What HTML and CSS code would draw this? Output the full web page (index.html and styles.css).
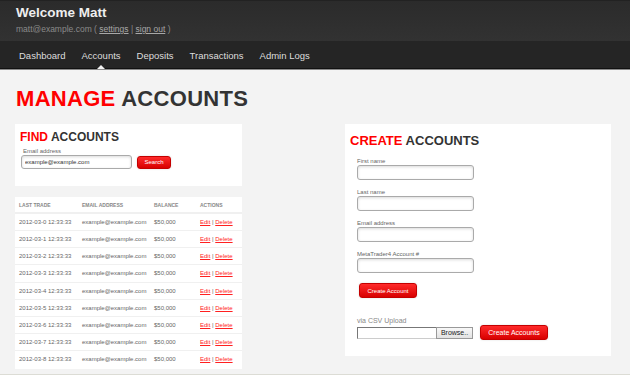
FILE: index.html
```html
<!DOCTYPE html>
<html lang="en">

<head>
  <meta charset="UTF-8">
  <meta name="viewport" content="width=device-width, initial-scale=1">
  <title>Manage Accounts</title>
  <link rel="stylesheet" href="styles.css">
</head>

<body>

  <header class="topbar">
    <div class="welcome">Welcome Matt</div>
    <div class="userline">matt@example.com ( <a href="#">settings</a> | <a href="#">sign out</a> )</div>
  </header>

  <nav class="navbar">
    <ul>
      <li><a href="#">Dashboard</a></li>
      <li><a href="#" class="active">Accounts</a></li>
      <li><a href="#">Deposits</a></li>
      <li><a href="#">Transactions</a></li>
      <li><a href="#">Admin Logs</a></li>
    </ul>
  </nav>

  <div class="content">
    <h1 class="page-title"><span class="red">MANAGE</span> ACCOUNTS</h1>

    <div class="columns">
      <div class="left">
        <div class="panel find">
          <h2><span class="red">FIND</span> ACCOUNTS</h2>
          <label class="small-label">Email address</label>
          <div class="search-row">
            <input type="text" class="field field-find" value="example@example.com">
            <button class="btn btn-search">Search</button>
          </div>
        </div>

        <div class="panel list">
          <table>
            <thead>
              <tr>
                <th>Last Trade</th>
                <th>Email Address</th>
                <th>Balance</th>
                <th>Actions</th>
              </tr>
            </thead>
            <tbody>
              <tr><td>2012-03-0 12:33:33</td><td>example@example.com</td><td>$50,000</td><td><a href="#">Edit</a> | <a href="#">Delete</a></td></tr>
              <tr><td>2012-03-1 12:33:33</td><td>example@example.com</td><td>$50,000</td><td><a href="#">Edit</a> | <a href="#">Delete</a></td></tr>
              <tr><td>2012-03-2 12:33:33</td><td>example@example.com</td><td>$50,000</td><td><a href="#">Edit</a> | <a href="#">Delete</a></td></tr>
              <tr><td>2012-03-3 12:33:33</td><td>example@example.com</td><td>$50,000</td><td><a href="#">Edit</a> | <a href="#">Delete</a></td></tr>
              <tr><td>2012-03-4 12:33:33</td><td>example@example.com</td><td>$50,000</td><td><a href="#">Edit</a> | <a href="#">Delete</a></td></tr>
              <tr><td>2012-03-5 12:33:33</td><td>example@example.com</td><td>$50,000</td><td><a href="#">Edit</a> | <a href="#">Delete</a></td></tr>
              <tr><td>2012-03-6 12:33:33</td><td>example@example.com</td><td>$50,000</td><td><a href="#">Edit</a> | <a href="#">Delete</a></td></tr>
              <tr><td>2012-03-7 12:33:33</td><td>example@example.com</td><td>$50,000</td><td><a href="#">Edit</a> | <a href="#">Delete</a></td></tr>
              <tr><td>2012-03-8 12:33:33</td><td>example@example.com</td><td>$50,000</td><td><a href="#">Edit</a> | <a href="#">Delete</a></td></tr>
            </tbody>
          </table>
        </div>
      </div>

      <div class="panel create">
        <h2><span class="red">CREATE</span> ACCOUNTS</h2>
        <div class="form">
          <div class="group">
            <label class="small-label">First name</label>
            <input type="text" class="field">
          </div>
          <div class="group">
            <label class="small-label">Last name</label>
            <input type="text" class="field">
          </div>
          <div class="group">
            <label class="small-label">Email address</label>
            <input type="text" class="field">
          </div>
          <div class="group">
            <label class="small-label">MetaTrader4 Account #</label>
            <input type="text" class="field">
          </div>
          <button class="btn btn-create">Create Account</button>

          <label class="csv-label">via CSV Upload</label>
          <div class="upload-row">
            <div class="file-box">
              <span class="file-name"></span>
              <span class="browse">Browse..</span>
            </div>
            <button class="btn btn-upload">Create Accounts</button>
          </div>
        </div>
      </div>
    </div>
  </div>

  <footer class="footer"></footer>

</body>

</html>
```

FILE: styles.css
```css
body {
  font-family: 'Liberation Sans', Arial, sans-serif;
  background-color: #f3f3f3;
  margin: 0;
  color: #333;
}

.red {
  color: #ff0000;
}

/* Top bar */
.topbar {
  background: linear-gradient(#2b2b2b, #323232);
  border-top: 1px solid #222;
  height: 41px;
  padding: 4px 0 0 16px;
  box-sizing: border-box;
}

.welcome {
  font-size: 13.5px;
  font-weight: bold;
  line-height: 16px;
  color: #eeeeee;
}

.userline {
  margin-top: 3px;
  font-size: 8.5px;
  line-height: 11px;
  color: #8a8a8a;
}

.userline a {
  color: #a8a8a8;
}

/* Navbar */
.navbar {
  background-color: #252525;
  height: 27px;
  border-bottom: 1px solid #111;
  box-shadow: 0 1px 0 #8a8a8a;
}

.navbar ul {
  display: flex;
  margin: 0;
  padding: 0 0 0 11px;
  list-style: none;
}

.navbar ul li a {
  position: relative;
  display: block;
  height: 27px;
  padding: 2px 8px 0 8px;
  box-sizing: border-box;
  line-height: 26px;
  font-size: 9.5px;
  color: #dddddd;
  text-decoration: none;
}

.navbar ul li a.active::after {
  content: "";
  position: absolute;
  left: 50%;
  bottom: -1px;
  margin-left: -4px;
  border-left: 4px solid transparent;
  border-right: 4px solid transparent;
  border-bottom: 4px solid #f3f3f3;
}

/* Content */
.content {
  padding: 0 0 0 15px;
}

.page-title {
  margin: 17px 0 12px 1px;
  font-size: 22px;
  line-height: 26px;
  letter-spacing: 0.3px;
  color: #333;
}

.columns {
  display: grid;
  grid-template-columns: 227px 266px;
  column-gap: 103px;
  align-items: start;
}

.panel {
  background-color: #fff;
}

.panel h2 {
  margin: 0;
  color: #333;
}

.small-label {
  display: block;
  font-size: 6px;
  line-height: 8px;
  color: #666;
}

.field {
  display: block;
  box-sizing: border-box;
  width: 117px;
  height: 15px;
  margin: 0;
  padding: 0 4px;
  border: 1px solid #aaa;
  border-radius: 3px;
  background: #fff;
  box-shadow: inset 0 1px 3px rgba(0, 0, 0, 0.15);
  font-family: inherit;
  font-size: 6px;
  color: #333;
}

.btn {
  box-sizing: border-box;
  height: 15px;
  padding: 0;
  border: 1px solid #c40000;
  border-radius: 3px;
  background: linear-gradient(#ff2a2a, #d80000);
  color: #fff;
  font-family: inherit;
  font-size: 6px;
  cursor: pointer;
  box-shadow: 0 0 2px rgba(0, 0, 0, 0.15);
}

/* Find */
.find {
  padding: 6px 0 17px 5px;
}

.find h2 {
  font-size: 12px;
  line-height: 14px;
  margin-bottom: 4px;
}

.find .small-label {
  padding-left: 3px;
  line-height: 7px;
}

.search-row {
  display: flex;
  align-items: center;
  gap: 5px;
  padding-left: 1px;
}

.field-find {
  width: 111px;
  height: 14px;
  padding-left: 3px;
}

.btn-search {
  width: 34px;
  height: 13px;
}

/* Table */
.list {
  margin-top: 11px;
  padding-bottom: 2px;
}

.list table {
  width: 100%;
  border-collapse: collapse;
  table-layout: fixed;
}

.list th:nth-child(1) { width: 59px; }
.list th:nth-child(2) { width: 68px; }
.list th:nth-child(3) { width: 42px; }

.list th {
  height: 15px;
  padding: 0 0 0 4px;
  text-align: left;
  font-size: 5px;
  font-weight: bold;
  text-transform: uppercase;
  color: #888;
  border-bottom: 2px solid #f0f0f0;
}

.list td {
  height: 16.125px;
  padding: 0 0 0 4px;
  font-size: 6px;
  color: #666;
  white-space: nowrap;
  border-top: 1px solid #f0f0f0;
}

.list td a {
  color: #ff2020;
}

/* Create */
.create {
  padding: 9px 0 16px 5px;
}

.create h2 {
  font-size: 13px;
  line-height: 15px;
  margin-bottom: 9px;
}

.form {
  padding-left: 7px;
}

.group {
  margin-bottom: 8px;
}

.btn-create {
  display: block;
  width: 58px;
  margin: 10px 0 0 2px;
}

.csv-label {
  display: block;
  margin-top: 19px;
  font-size: 7px;
  line-height: 8px;
  color: #888;
}

.upload-row {
  display: flex;
  align-items: center;
  gap: 7px;
  height: 15px;
}

.file-box {
  display: flex;
  height: 12px;
}

.file-name {
  box-sizing: border-box;
  width: 79px;
  border: 1px solid #777;
  border-right: none;
  border-bottom-color: #ccc;
  background: #fff;
}

.browse {
  box-sizing: border-box;
  width: 37px;
  border: 1px solid #999;
  background: linear-gradient(#f8f8f8, #e2e2e2);
  font-size: 7px;
  line-height: 10px;
  text-align: center;
  color: #222;
}

.btn-upload {
  width: 68px;
  font-size: 7px;
}

.footer {
  margin-top: 5px;
  height: 3px;
  border-top: 1px solid #dcdcd5;
  background: #f0f0ec;
}
```
